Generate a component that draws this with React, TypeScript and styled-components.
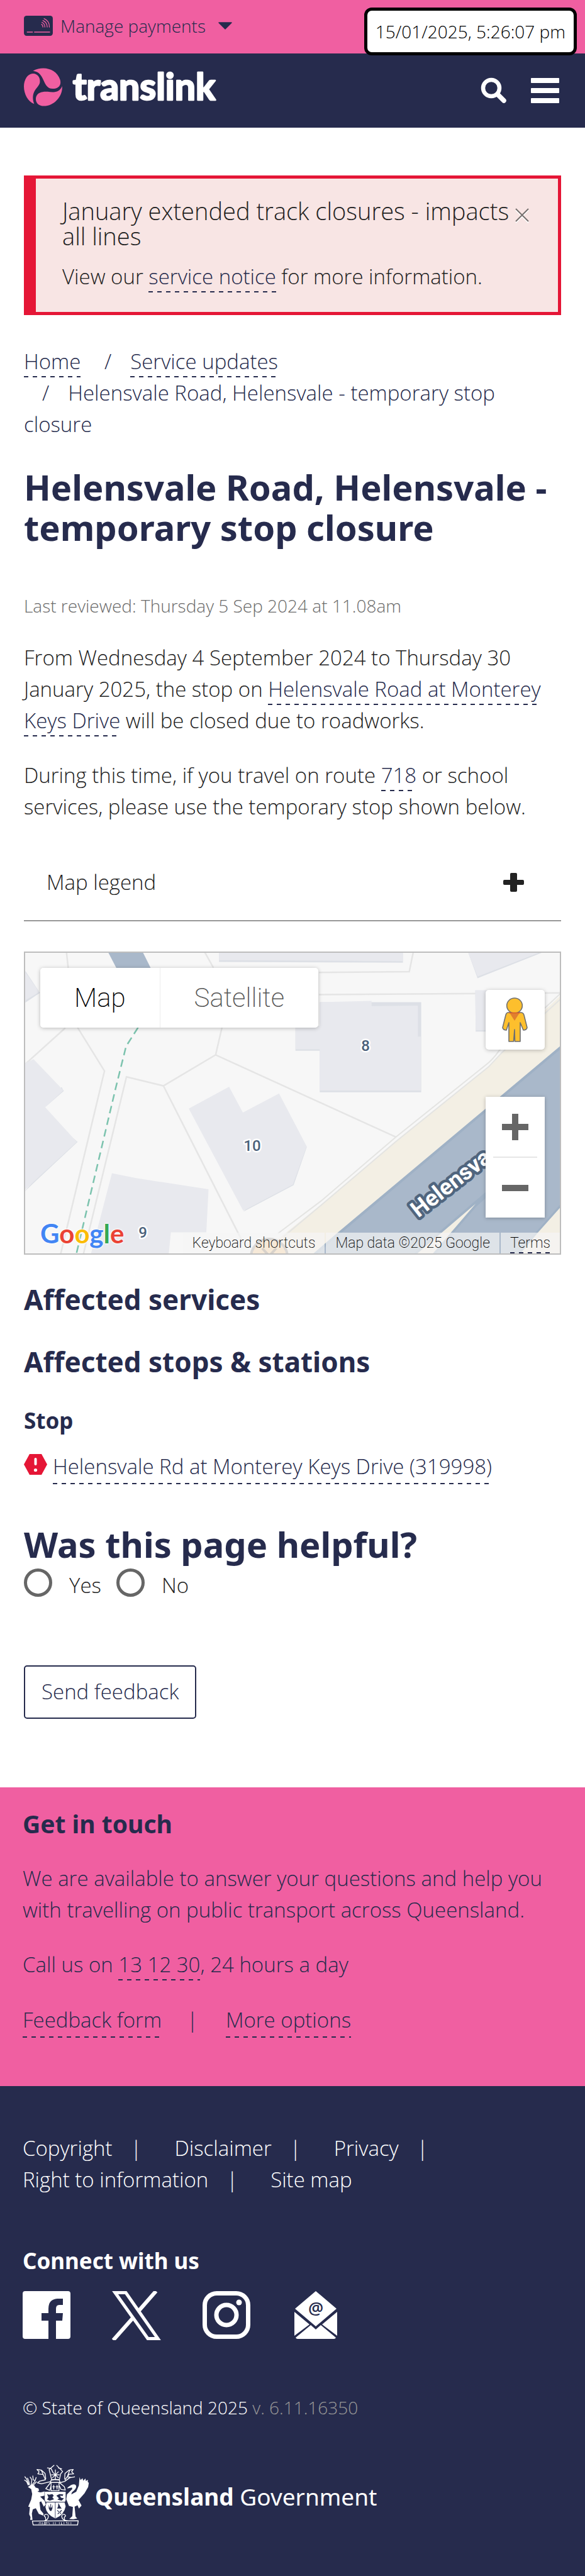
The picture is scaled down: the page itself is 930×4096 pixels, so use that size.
import React from 'react';
import styled, { createGlobalStyle, css } from 'styled-components';

const navy = '#262b4d';
const pink = '#f05fa1';
const red = '#e51636';
const ink = '#222222';

const body = `'Open Sans', 'Noto Sans', sans-serif`;
const heading = `'Noto Sans', 'Open Sans', sans-serif`;

const GlobalStyle = createGlobalStyle`
  *, *::before, *::after { box-sizing: border-box; }
  body {
    margin: 0;
    background: #fff;
    color: ${ink};
    font-family: ${body};
    font-size: 33px;
    font-weight: 300;
    line-height: 50px;
  }
  h1, h2, h3, p, ul, ol { margin: 0; padding: 0; }
  button { font: inherit; color: inherit; background: none; border: 0; padding: 0; cursor: pointer; }
  svg { display: block; }
`;

const dashedUnderline = css`
  padding-bottom: 3px;
  background: linear-gradient(to right, ${navy} 50%, transparent 50%) 0 100% / 14px 2px repeat-x;
  -webkit-box-decoration-break: clone;
  box-decoration-break: clone;
`;

const Link = styled.a`
  color: ${navy};
  text-decoration: none;
  ${dashedUnderline}
`;

const PaymentsBar = styled.div`
  background: ${pink};
  padding: 20px 38px 23px;
`;

const PaymentsButton = styled.button`
  display: flex;
  align-items: center;
  color: ${navy};
  font-size: 28px;
  line-height: 42px;
  svg:first-child { margin-right: 12px; }
  svg:last-child { margin-left: 20px; }
`;

const Timestamp = styled.time`
  position: absolute;
  top: 12px;
  right: 13px;
  padding: 12px 13px;
  border: 5px solid #000;
  border-radius: 12px;
  background: #fff;
  color: #000;
  font-size: 28px;
  line-height: 42px;
`;

const Header = styled.header`
  display: flex;
  justify-content: space-between;
  align-items: center;
  padding: 15px 38px 25px;
  background: ${navy};
`;

const Tools = styled.nav`
  display: flex;
  align-items: flex-end;
  gap: 39px;
  padding-top: 9px;
  padding-right: 3px;
  color: #fff;
`;

const Main = styled.main`
  padding: 76px 38px 109px;
`;

const Alert = styled.section`
  display: flex;
  justify-content: space-between;
  border: 5px solid ${red};
  border-left-width: 19px;
  background: #f8e5e4;
  padding: 31px 46px 31px 42px;
  margin-bottom: 49px;
`;

const AlertTitle = styled.h2`
  font-size: 38px;
  font-weight: 300;
  line-height: 40px;
  margin-bottom: 20px;
`;

const CloseButton = styled.button`
  align-self: flex-start;
  margin-top: 16px;
`;

const Breadcrumb = styled.ol`
  list-style: none;
  color: ${navy};
  margin-bottom: 42px;
  li { display: inline-block; }
  li + li::before { content: '/'; padding: 0 30px 0 29px; }
`;

const PageTitle = styled.h1`
  display: block;
  font: 700 56px/64px ${heading};
  color: ${navy};
`;

const SectionTitle = styled.h2`
  font: 700 44px/56px ${heading};
  color: ${navy};
  margin-top: 43px;
`;

const SmallTitle = styled.h3<{ $light?: boolean }>`
  font: 700 35px/44px ${heading};
  color: ${(p) => (p.$light ? '#fff' : navy)};
  margin-top: ${(p) => (p.$light ? 0 : 44)}px;
  margin-bottom: 26px;
`;

const Reviewed = styled.p`
  margin-top: 72px;
  color: #6b6b6b;
  font-size: 28px;
  line-height: 42px;
`;

const Paragraph = styled.p`
  margin-top: 37px;
`;

const Accordion = styled.button`
  display: flex;
  justify-content: space-between;
  align-items: center;
  width: 100%;
  margin: 35px 0 48px;
  padding: 35px 59px 35px 36px;
  border-bottom: 2px solid #979797;
  text-align: left;
  line-height: 50px;
`;

const MapFrame = styled.section`
  position: relative;
  height: 482px;
  border: 2px solid #bdbdbd;
  overflow: hidden;
  font-family: Roboto, sans-serif;
  font-weight: 200;
  > svg { width: 100%; height: 100%; }
`;

const MapTypes = styled.div`
  position: absolute;
  top: 24px;
  left: 24px;
  display: flex;
  border-radius: 5px;
  box-shadow: 0 1px 6px rgba(0, 0, 0, 0.25);
`;

const MapType = styled.button<{ $active?: boolean }>`
  padding: 0 54px;
  height: 95px;
  background: #fff;
  color: ${(p) => (p.$active ? '#000' : '#565656')};
  font-size: 42px;
  &:first-child { border-radius: 5px 0 0 5px; }
  &:last-child { border-radius: 0 5px 5px 0; border-left: 1px solid #ececec; }
`;

const MapControls = styled.div`
  position: absolute;
  top: 59px;
  right: 24px;
  display: flex;
  flex-direction: column;
  gap: 75px;
  width: 94px;
`;

const Pegman = styled.button`
  height: 95px;
  background: #fff;
  border-radius: 5px;
  box-shadow: 0 1px 6px rgba(0, 0, 0, 0.25);
`;

const Zoom = styled.div`
  background: #fff;
  box-shadow: 0 1px 6px rgba(0, 0, 0, 0.25);
  button { display: flex; align-items: center; justify-content: center; width: 100%; height: 95px; }
  button + button { border-top: 2px solid #e6e6e6; margin: 0 12px; width: 70px; height: 97px; }
`;

const Attribution = styled.div`
  position: absolute;
  right: 0;
  bottom: 0;
  display: flex;
  gap: 2px;
  font-size: 23px;
  line-height: 33px;
  color: #000;
  > * { background: rgba(245, 245, 245, 0.7); padding: 0 15px; height: 33px; }
`;

const TermsLink = styled.a`
  color: inherit;
  text-decoration: none;
  span { display: block; ${dashedUnderline} padding: 0; height: 33px; }
`;

const GoogleMark = styled.a`
  position: absolute;
  left: 24px;
  bottom: 7px;
  font: 700 42px/50px Lato, sans-serif;
  text-decoration: none;
  text-shadow: 0 0 3px #fff, 0 0 3px #fff, 0 0 3px #fff;
`;

const Letter = styled.span<{ $color: string }>`
  color: ${(p) => p.$color};
`;

const StopRow = styled.p`
  display: flex;
  align-items: flex-start;
  gap: 9px;
  margin-bottom: 63px;
  svg { margin-top: 5px; }
`;

const Poll = styled.fieldset`
  border: 0;
  margin: 0 0 102px;
  padding: 0;
  min-width: 0;
  legend { padding: 0; }
`;

const PollOptions = styled.div`
  display: flex;
  gap: 24px;
  padding-top: 7px;
  label { display: flex; gap: 27px; }
  span { padding-top: 2px; line-height: 50px; }
`;

const Radio = styled.input`
  appearance: none;
  width: 45px;
  height: 45px;
  margin: 0;
  border: 5px solid #666;
  border-radius: 50%;
  background: #fff;
  &:checked { box-shadow: inset 0 0 0 8px #fff; background: ${navy}; }
`;

const SendButton = styled.button`
  display: block;
  border: 2px solid ${navy};
  border-radius: 5px;
  padding: 15px 26px 16px;
  color: ${navy};
  line-height: 50px;
`;

const Contact = styled.section`
  background: ${pink};
  color: ${navy};
  padding: 33px 36px 77px;
`;

const ContactTitle = styled.h2`
  font: 700 39px/50px ${heading};
`;

const ContactLinks = styled.p`
  display: flex;
  gap: 40px;
  margin-top: 38px;
  span { padding-right: 4px; }
`;

const Footer = styled.footer`
  background: ${navy};
  color: #fff;
  padding: 74px 36px 83px;
`;

const FooterLinks = styled.ul`
  display: flex;
  flex-wrap: wrap;
  column-gap: 52px;
  max-width: 760px;
  margin-bottom: 82px;
  list-style: none;
  a { color: inherit; text-decoration: none; }
  li:not(:last-child)::after { content: '|'; padding-left: 29px; }
`;

const Social = styled.div`
  display: flex;
  gap: 66px;
  margin-bottom: 86px;
  a { color: #fff; }
`;

const Copyright = styled.p`
  font-size: 28px;
  line-height: 42px;
  margin-bottom: 70px;
  span { color: #979797; }
`;

const Government = styled.div`
  display: flex;
  align-items: center;
  gap: 9px;
  font: 400 37px/48px 'Noto Sans', sans-serif;
  padding-left: 2px;
  p { padding-top: 4px; }
  b { font-weight: 700; }
`;

const CardIcon = () => (
  <svg width="46" height="32" viewBox="0 0 175 122" aria-hidden="true">
    <rect width="175" height="122" rx="16" fill={navy} />
    <g fill="none" stroke={pink} strokeWidth="6" strokeLinecap="round">
      <path d="M20 99h32M64 99h92" />
      <path d="M107 52q8 5 8 17M109 40q18 8 18 29M115 29q26 11 26 40M122 18q34 14 32 51" strokeWidth="5" />
    </g>
  </svg>
);

const Logo = () => (
  <svg width="320" height="78" viewBox="0 -30 1216 296" role="img" aria-label="translink">
    <g fill={pink}>
      <path d="M55 18C115-14 195 2 219 72C229 112 200 126 174 126C108 124 132 26 55 18Z" />
      <path d="M0 112C0 70 24 34 54 34C88 34 101 66 96 90C88 122 36 140 62 218C24 202 0 158 0 112Z" />
      <path d="M231 110C236 174 178 236 110 230C82 226 68 204 73 178C80 148 112 142 144 144C186 150 216 146 231 110Z" />
    </g>
    <text x="295" y="194" fontFamily="Lato, sans-serif" fontWeight="700" fontSize="224" fill="#fff" stroke="#fff" strokeWidth="10" strokeLinejoin="round">
      translink
    </text>
  </svg>
);

const MapDrawing = () => (
  <svg viewBox="0 0 850 478" preserveAspectRatio="xMidYMid slice" aria-hidden="true">
    <rect width="850" height="478" fill="#f7f7f7" />
    <g transform="matrix(.5931 0 0 .3421 -40 -31)">
      <g fill="none" stroke="#e5e5e5" strokeWidth="2.5">
        {[
          'M178 85L183 165', 'M548 85L572 160', 'M1108 85L1097 178L855 182', 'M855 285L1505 277',
          'M595 438L578 565L438 709L339 667L223 1495', 'M578 565L1061 947', 'M438 709L652 1440',
          'M208 438L280 640L162 1495', 'M175 440L60 620',
        ].map((d) => <path key={d} d={d} vectorEffect="non-scaling-stroke" />)}
      </g>
      <path d="M289 85H382L405 165H313Z" fill="#a9b8ca" />
      <g fill="#dde0e6">
        <path d="M587 92H1080V137L587 133Z M1254 85H1460L1280 209ZM68 175L107 277L68 322ZM1274 265H1330V457H1275ZM857 320H1129V739H857V546H792V430H857ZM652 1294L787 1171L823 990ZM121 808L171 733L165 715ZM60 1210L208 970L195 950Z" />
      </g>
      <g fill="#e8e9ee">
        <path d="M587 85H1080V129L587 125ZM1254 85H1452L1280 201ZM60 160L105 273L60 320ZM1274 265H1330V451H1275ZM857 320L996 314V338L1120 336V480H1129V731H857V539H792V430H857Z" />
        <path d="M614 713L651 833L748 745L822 990L785 1168L652 1290L506 815ZM90 585L170 730L121 808L206 970L60 1203V610ZM300 1115L365 1138L559 1190L553 1390H458L452 1495H243Z" />
      </g>
      <path d="M1505 285L1460 358L1345 555L1310 620L1061 965L860 1262L752 1412L690 1495H1505Z" fill="#f3efe4" />
      <g fill="none" stroke="#e4e4e2" strokeWidth="2">
        <path d="M1505 275L1338 545Q1320 590 1300 615L1061 947L860 1245L745 1395" vectorEffect="non-scaling-stroke" />
        <path d="M1505 302L1345 555L1310 620L1061 968L860 1265L760 1410" vectorEffect="non-scaling-stroke" />
      </g>
      <path d="M1505 523L905 1395L838 1495H1505Z" fill="#a9b8ca" />
      <g fill="none" stroke="#9fb1c5" strokeWidth="4">
        <path d="M1505 527L905 1399L841 1495" vectorEffect="non-scaling-stroke" />
        <path d="M1340 1155L1275 1250L1110 1495M1345 1155L1275 1265L1160 1495M1505 1262L1440 1391L1390 1495" vectorEffect="non-scaling-stroke" />
      </g>
      <path d="M1275 1257L1114 1495H1157ZM1505 1268L1442 1391L1392 1495H1505Z" fill="#f3efe4" />
      <path d="M370 438L338 525L310 720L204 1495" fill="none" stroke="#7cc3ae" strokeWidth="2.5" strokeDasharray="12 7" vectorEffect="non-scaling-stroke" />
    </g>
    <circle cx="388" cy="484" r="29" fill="#f8cd95" stroke="#9a948c" strokeWidth="4" />
    <path d="M377 470l11 12 11-12" fill="none" stroke="#8f7d66" strokeWidth="4" />
    <g fontFamily="Roboto, sans-serif" fontWeight="500" fontSize="24" fill="#4a617b" stroke="#fff" strokeWidth="5" strokeLinejoin="round" paintOrder="stroke" textAnchor="middle">
      <text x="541" y="156">8</text>
      <text x="361" y="315">10</text>
      <text x="187" y="453">9</text>
    </g>
    <text x="625" y="422" transform="rotate(-38 625 422)" fontFamily="Roboto, sans-serif" fontWeight="700" fontSize="36" fill="#fff" stroke="#50657e" strokeWidth="9" strokeLinejoin="round" paintOrder="stroke">
      Helensva
    </text>
  </svg>
);

const PegmanIcon = () => (
  <svg width="94" height="95" viewBox="0 0 94 95" aria-hidden="true">
    <g fill="#fdbf2d" stroke="#6f6f6f" strokeWidth="1.6">
      <path d="M36 36h20q4 0 5 4l5 20q-1 4-6 4l-5-12v30H46.500L46 63l-1.500 19H37V52l-4 12q-5 0-6-4l5-20q1-4 4-4z" strokeLinejoin="round" />
      <ellipse cx="46" cy="25" rx="12.300" ry="12" />
    </g>
    <path d="M38 36.500h16L46 49z" fill="#e17f2e" />
    <path d="M37 36.500h18" stroke="#d65a2b" strokeWidth="1.500" />
  </svg>
);

const Crest = () => (
  <svg width="104" height="97" viewBox="54 49 395 368" role="img" aria-label="Queensland coat of arms">
    <g fill="none" stroke="#fff" strokeWidth="5" strokeLinejoin="round" strokeLinecap="round">
      <path d="M58 142L70 150L80 172M60 122L70 135L84 168M76 130L84 150L88 170M92 124L102 140L98 170M108 117L110 140L122 145M128 126L120 150L102 172M130 152L112 170L100 174" />
      <path d="M133 78L160 82L182 102L186 134M133 78L146 92L138 104L170 108L184 140L150 148L136 158L160 164L212 152M160 84L172 112M352 78L326 82L302 102L300 134M352 78L342 92L354 104L328 106L302 140M360 122L330 128L300 150L270 158M330 84L316 122L342 126" />
      <path d="M236 53L206 78L212 100L222 142L240 138M252 53L288 90L276 104L268 140L246 138M196 68L218 72L228 92M262 68L282 74M220 110L268 110M226 92L262 128M262 92L226 128M244 80V140" />
      <path d="M218 142Q243 134 268 142L272 156H214ZM214 158L186 194L210 204L218 176M270 158L298 182L304 202L278 198L268 176M218 158V206H266V158M234 174V196M228 182H240M254 174V196M248 182H260" />
      <path d="M182 350Q200 344 202 362Q198 386 176 388M182 350Q170 356 184 366L186 382M300 350Q284 344 282 362Q286 386 318 388M300 350Q312 356 298 366L300 384" />
      <path d="M105 389L382 387L378 413H110Z" />
    </g>
    <g fill="#fff">
      <path d="M78 184L96 170L116 172L124 186L142 192L146 206L136 208Q148 222 178 210V236L152 242L180 268L186 290L174 302L158 270L148 276L154 322L172 344L172 356L144 346L126 312L108 318L102 344L106 382L92 382L94 366L86 348L90 304L80 302L98 260L104 226L98 196Z" />
      <path d="M390 124L396 142L408 130L412 146L426 132L428 148L440 140V154L446 158L442 184L420 222L384 262L402 296L386 314L378 294L360 302L366 362L376 374L352 378L328 376L346 360L350 304L326 298L310 258L314 228L346 196L344 186L316 192L318 186L338 172Q366 160 370 180Q370 196 344 216L340 228L370 212L386 174Z" />
      <path d="M180 212H306V262L300 278L306 300Q298 350 244 374Q190 350 184 304L190 280L180 262Z" />
    </g>
    <g fill={navy}>
      <path d="M194 226l12 4 20-4 8 10-8 10 10 12-26 8-16-6 8-14zM250 236l18-10 24 2-4 10-16-2 6 12 18 4-14 14-26-6 10-8z" />
      <path d="M186 273h118v4H186zM242 275h3v97h-3zM262 280l12 22 8 12h-28l6-12zM204 290l6 18h4v-22h4v22h4l6-18-2 24-6 14h-8l-8-14z" />
      <path d="M256 322l24 22-4 2-22-20zM280 322l-24 24 4 2 24-22z" />
    </g>
    <path d="M148 396l-3 12M154 396l3 12M165 396v10h6M178 396v12h6v-12zM191 408v-12l6 6M204 396l4 12M232 396v12M244 396v12M268 396v12M280 396v12h6M296 396v12M308 396h6v12M324 396v12M338 396v12" fill="none" stroke="#fff" strokeWidth="3" />
  </svg>
);

export default function App() {
  return (
    <>
      <GlobalStyle />
      <PaymentsBar>
        <PaymentsButton type="button">
          <CardIcon />
          Manage payments
          <svg width="22" height="12" viewBox="0 0 22 12" aria-hidden="true">
            <path d="M1 1h20L11 11z" fill={navy} stroke={navy} strokeWidth="1.500" strokeLinejoin="round" />
          </svg>
        </PaymentsButton>
      </PaymentsBar>
      <Timestamp>15/01/2025, 5:26:07 pm</Timestamp>
      <Header>
        <a href="#home"><Logo /></a>
        <Tools>
          <button type="button" aria-label="Search">
            <svg width="41" height="41" viewBox="0 0 41 41" fill="none" stroke="#fff">
              <circle cx="17" cy="17" r="13" strokeWidth="6.500" />
              <path d="M27 27l10 10" strokeWidth="7.500" strokeLinecap="round" />
            </svg>
          </button>
          <button type="button" aria-label="Menu">
            <svg width="45" height="40" viewBox="0 0 45 40" fill="#fff">
              <rect width="45" height="8" rx="1" />
              <rect y="16" width="45" height="8" rx="1" />
              <rect y="32" width="45" height="8" rx="1" />
            </svg>
          </button>
        </Tools>
      </Header>
      <Main>
        <Alert>
          <div>
            <AlertTitle>January extended track closures - impacts all lines</AlertTitle>
            <p>View our <Link href="#notice">service notice</Link> for more information.</p>
          </div>
          <CloseButton type="button" aria-label="Close">
            <svg width="22" height="24" viewBox="0 0 22 24" fill="none" strokeWidth="2">
              <path d="M1 3l20 20M21 3L1 23" stroke="#fff" />
              <path d="M1 1l20 20M21 1L1 21" stroke="#77706f" />
            </svg>
          </CloseButton>
        </Alert>
        <nav aria-label="Breadcrumb">
          <Breadcrumb>
            <li><Link href="#home">Home</Link></li>{' '}
            <li><Link href="#updates">Service updates</Link></li>{' '}
            <li>Helensvale Road, Helensvale - temporary stop closure</li>
          </Breadcrumb>
        </nav>
        <PageTitle>Helensvale Road, Helensvale - temporary stop closure</PageTitle>
        <Reviewed>Last reviewed: Thursday 5 Sep 2024 at 11.08am</Reviewed>
        <Paragraph>
          From Wednesday 4 September 2024 to Thursday 30 January 2025, the stop on{' '}
          <Link href="#stop">Helensvale Road at Monterey Keys Drive</Link> will be closed due to roadworks.
        </Paragraph>
        <Paragraph>
          During this time, if you travel on route <Link href="#718">718</Link> or school services, please use the
          temporary stop shown below.
        </Paragraph>
        <Accordion type="button" aria-expanded="false">
          Map legend
          <svg width="33" height="30" viewBox="0 0 33 30" fill={ink} aria-hidden="true">
            <rect x="11" width="11" height="30" rx="2" />
            <rect y="11" width="33" height="8" rx="2" />
          </svg>
        </Accordion>
        <MapFrame aria-label="Map">
          <MapDrawing />
          <MapTypes>
            <MapType type="button" $active>Map</MapType>
            <MapType type="button">Satellite</MapType>
          </MapTypes>
          <MapControls>
            <Pegman type="button" aria-label="Street View"><PegmanIcon /></Pegman>
            <Zoom>
              <button type="button" aria-label="Zoom in">
                <svg width="42" height="42" viewBox="0 0 42 42"><path d="M16 0h10v16h16v10H26v16H16V26H0V16h16z" fill="#666" /></svg>
              </button>
              <button type="button" aria-label="Zoom out">
                <svg width="42" height="10" viewBox="0 0 42 10"><path d="M0 0h42v10H0z" fill="#666" /></svg>
              </button>
            </Zoom>
          </MapControls>
          <GoogleMark href="#google" aria-label="Google">
            <Letter $color="#4285f4">G</Letter>
            <Letter $color="#ea4335">o</Letter>
            <Letter $color="#fbbc05">o</Letter>
            <Letter $color="#4285f4">g</Letter>
            <Letter $color="#34a853">l</Letter>
            <Letter $color="#ea4335">e</Letter>
          </GoogleMark>
          <Attribution>
            <button type="button">Keyboard shortcuts</button>
            <span>Map data ©2025 Google</span>
            <TermsLink href="#terms"><span>Terms</span></TermsLink>
          </Attribution>
        </MapFrame>
        <SectionTitle>Affected services</SectionTitle>
        <SectionTitle>Affected stops &amp; stations</SectionTitle>
        <SmallTitle>Stop</SmallTitle>
        <StopRow>
          <svg width="37" height="33" viewBox="0 0 37 33" aria-hidden="true">
            <path d="M9 0h19l9 16.500L28 33H9L0 16.500z" fill={red} />
            <path d="M16.500 8a2 2 0 0 1 4 0v8a2 2 0 0 1-4 0z" fill="#fff" />
            <circle cx="18.500" cy="25.500" r="2.600" fill="#fff" />
          </svg>
          <Link href="#319998">Helensvale Rd at Monterey Keys Drive (319998)</Link>
        </StopRow>
        <Poll>
          <legend><PageTitle as="span">Was this page helpful?</PageTitle></legend>
          <PollOptions>
            <label><Radio type="radio" name="helpful" value="yes" /><span>Yes</span></label>
            <label><Radio type="radio" name="helpful" value="no" /><span>No</span></label>
          </PollOptions>
        </Poll>
        <SendButton type="button">Send feedback</SendButton>
      </Main>
      <Contact>
        <ContactTitle>Get in touch</ContactTitle>
        <Paragraph>We are available to answer your questions and help you with travelling on public transport across Queensland.</Paragraph>
        <Paragraph>Call us on <Link href="tel:131230">13 12 30</Link>, 24 hours a day</Paragraph>
        <ContactLinks>
          <Link href="#feedback">Feedback form</Link>
          <span>|</span>
          <Link href="#options">More options</Link>
        </ContactLinks>
      </Contact>
      <Footer>
        <FooterLinks>
          <li><a href="#copyright">Copyright</a></li>
          <li><a href="#disclaimer">Disclaimer</a></li>
          <li><a href="#privacy">Privacy</a></li>
          <li><a href="#rti">Right to information</a></li>
          <li><a href="#sitemap">Site map</a></li>
        </FooterLinks>
        <SmallTitle $light>Connect with us</SmallTitle>
        <Social>
          <a href="#facebook" aria-label="Facebook">
            <svg width="76" height="76" viewBox="0 0 76 76">
              <path d="M4 0h68q4 0 4 4v68q0 4-4 4H53V47h10l1-12H53v-7q0-6 5-6h6V12h-9q-14 1-14 16v7H30v12h11v29H4q-4 0-4-4V4q0-4 4-4z" fill="#fff" />
            </svg>
          </a>
          <a href="#x" aria-label="X">
            <svg width="78" height="78" viewBox="0 0 78 78" fill="none" stroke="#fff" strokeWidth="5">
              <path d="M5 2.500h17l51 73H57z" />
              <path d="M70 0L42 32M33 43L2 78" strokeWidth="6" />
            </svg>
          </a>
          <a href="#instagram" aria-label="Instagram">
            <svg width="76" height="76" viewBox="0 0 76 76" fill="none" stroke="#fff" strokeWidth="7">
              <rect x="3.500" y="3.500" width="69" height="69" rx="19" />
              <circle cx="38" cy="38" r="16" />
              <circle cx="58" cy="18" r="4.500" fill="#fff" stroke="none" />
            </svg>
          </a>
          <a href="#email" aria-label="Email">
            <svg width="76" height="76" viewBox="-4 0 76 76">
              <path d="M34 0L67 28L34 56L1 28ZM0 33L24 53L0 71ZM68 33L44 53L68 71ZM26 54L34 61L42 54L66 74Q65 76 63 76H5Q3 76 2 74Z" fill="#fff" />
              <text x="34" y="37" textAnchor="middle" fontFamily="Open Sans, sans-serif" fontWeight="600" fontSize="27" fill={navy}>@</text>
            </svg>
          </a>
        </Social>
        <Copyright>© State of Queensland 2025 <span>v. 6.11.16350</span></Copyright>
        <Government>
          <Crest />
          <p><b>Queensland</b> Government</p>
        </Government>
      </Footer>
    </>
  );
}
